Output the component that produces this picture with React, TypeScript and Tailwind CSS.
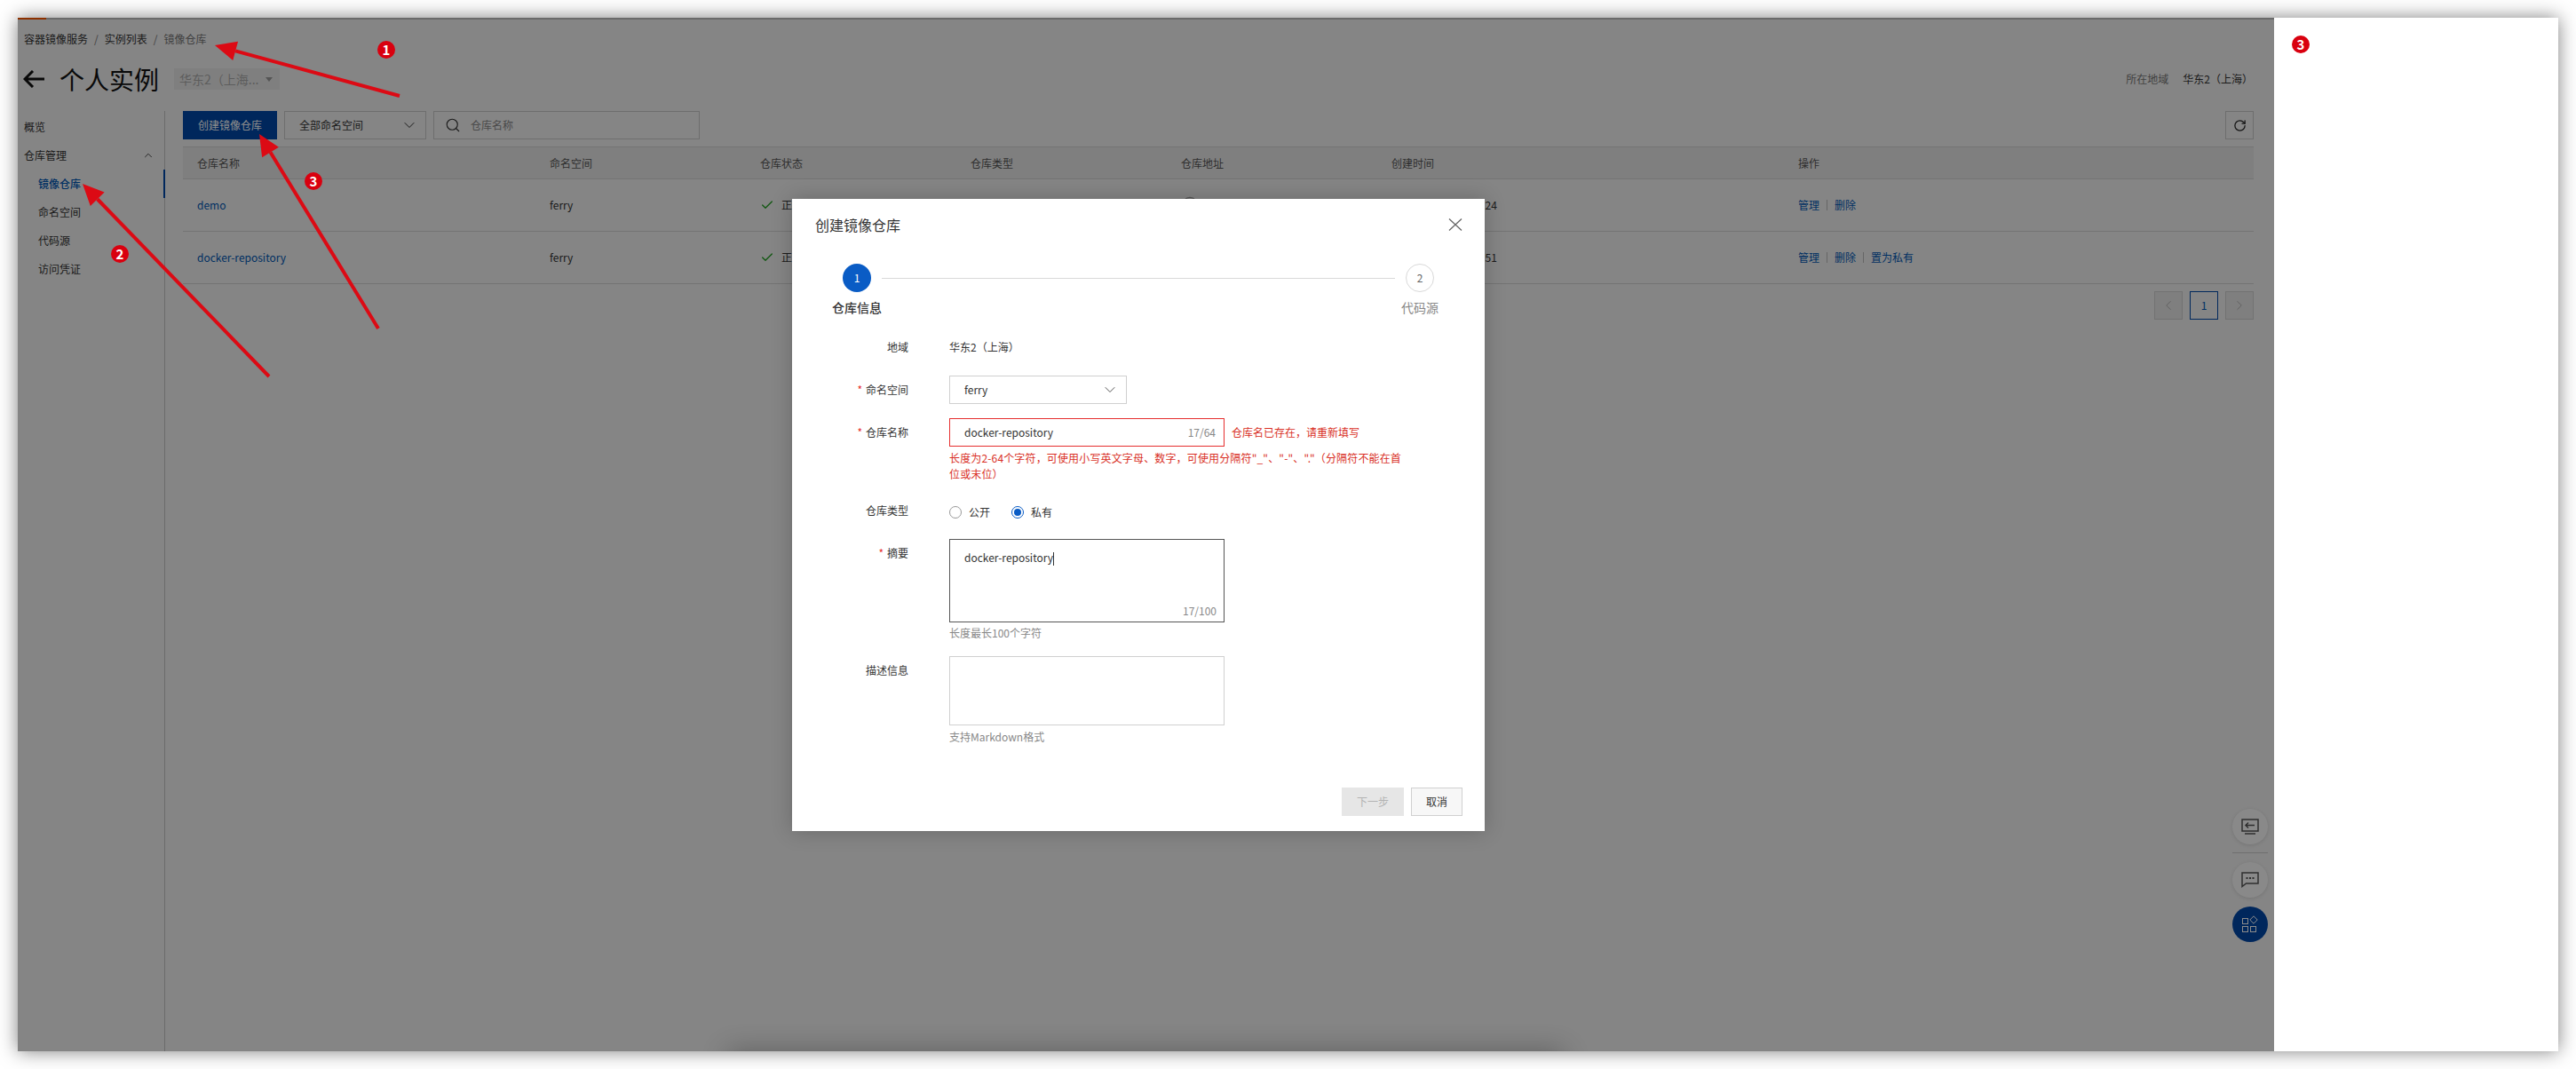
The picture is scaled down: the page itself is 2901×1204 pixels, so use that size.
import { ChevronDown, ChevronLeft, ChevronRight, ChevronUp, Check, RotateCw, Search } from "lucide-react";

const columns = ["仓库名称", "命名空间", "仓库状态", "仓库类型", "仓库地址", "创建时间", "操作"];

const repos = [
  { name: "demo", time: "2021-07-19 15:06:24", actions: ["管理", "删除"] },
  { name: "docker-repository", time: "2021-07-19 15:11:51", actions: ["管理", "删除", "置为私有"] },
];

const gridCols = "grid grid-cols-[397px_237px_237px_237px_237px_458px_1fr]";

function Annotation({ tail, tip }: { tail: number[]; tip: number[] }) {
  const dx = tip[0] - tail[0];
  const dy = tip[1] - tail[1];
  const len = Math.hypot(dx, dy);
  const ux = dx / len;
  const uy = dy / len;
  const baseX = tip[0] - ux * 24;
  const baseY = tip[1] - uy * 24;
  const head = [
    `${tip[0]},${tip[1]}`,
    `${baseX - uy * 11},${baseY + ux * 11}`,
    `${baseX + uy * 11},${baseY - ux * 11}`,
  ].join(" ");
  return (
    <g fill="#dc0a14" stroke="#dc0a14">
      <line x1={tail[0]} y1={tail[1]} x2={baseX} y2={baseY} strokeWidth="4" />
      <polygon points={head} strokeWidth="0" />
    </g>
  );
}

function Badge({ n, className }: { n: number; className: string }) {
  return (
    <div
      className={`absolute w-5 h-5 rounded-full bg-[#d9000f] text-white text-[15px] font-bold leading-5 text-center ${className}`}
    >
      {n}
    </div>
  );
}

function FormRow({
  label,
  required,
  labelClass = "leading-8",
  className,
  children,
}: {
  label: string;
  required?: boolean;
  labelClass?: string;
  className: string;
  children: React.ReactNode;
}) {
  return (
    <div className={`flex items-start ${className}`}>
      <div className={`w-[131px] mr-[46px] shrink-0 text-right text-xs text-[#333] ${labelClass}`}>
        {required && <span className="text-[#e62e2e] mr-1">*</span>}
        {label}
      </div>
      <div className="flex-1 min-w-0">{children}</div>
    </div>
  );
}

function Modal() {
  return (
    <div className="absolute left-[872px] top-[204px] w-[780px] h-[712px] bg-white shadow-[0_0_22px_rgba(0,0,0,0.22)] flex flex-col">
      <div className="h-[58px] shrink-0 pl-[26px] pr-[25px] flex items-center justify-between">
        <span className="text-base text-[#333]">创建镜像仓库</span>
        <svg width="16" height="14" viewBox="0 0 16 14" fill="none" stroke="#666" strokeWidth="1.3">
          <path d="M1 0.5 L15 13.5 M15 0.5 L1 13.5" />
        </svg>
      </div>

      {/* Steps */}
      <div className="mt-[15px] pl-[45px] pr-[52px] flex items-start">
        <div className="flex flex-col items-center w-14">
          <div className="w-8 h-8 rounded-full bg-[#0a5cc5] text-white text-xs flex items-center justify-center">1</div>
          <div className="mt-[7px] text-sm leading-5 font-medium text-[#333]">仓库信息</div>
        </div>
        <div className="flex-1 h-px mt-4 mr-[7px] bg-[#d9d9d9]" />
        <div className="flex flex-col items-center">
          <div className="w-8 h-8 rounded-full border border-[#d9d9d9] text-[#666] text-xs flex items-center justify-center">2</div>
          <div className="mt-[7px] text-sm leading-5 text-[#888]">代码源</div>
        </div>
      </div>

      <FormRow label="地域" labelClass="leading-5" className="mt-[25px]">
        <div className="text-xs leading-5 text-[#333]">华东2（上海）</div>
      </FormRow>

      <FormRow label="命名空间" required className="mt-[22px]">
        <div className="w-[200px] h-8 border border-[#d0d0d0] pl-[16px] pr-[8px] flex items-center justify-between text-xs text-[#333]">
          ferry
          <ChevronDown size={20} strokeWidth={1.2} className="text-[#555]" />
        </div>
      </FormRow>

      <FormRow label="仓库名称" required className="mt-4">
        <div className="flex items-center">
          <div className="w-[310px] h-8 border border-[#e62e2e] pl-[16px] pr-[9px] flex items-center justify-between text-xs">
            <input readOnly value="docker-repository" className="w-[200px] outline-none text-[#333]" />
            <span className="text-[#888]">17/64</span>
          </div>
          <span className="ml-2 text-xs text-[#d93026]">仓库名已存在，请重新填写</span>
        </div>
        <div className="mt-1 w-[510px] text-xs leading-[18px] tracking-[0.15px] text-[#d93026]">
          长度为2-64个字符，可使用小写英文字母、数字，可使用分隔符"_"、"-"、"."（分隔符不能在首位或末位）
        </div>
      </FormRow>

      <FormRow label="仓库类型" labelClass="leading-4" className="mt-6">
        <div className="h-5 flex items-center text-xs text-[#333]">
          <span className="w-3.5 h-3.5 rounded-full border border-[#999]" />
          <span className="ml-2">公开</span>
          <span className="ml-6 w-3.5 h-3.5 rounded-full border border-[#0a5cc5] flex items-center justify-center">
            <span className="w-2 h-2 rounded-full bg-[#0a5cc5]" />
          </span>
          <span className="ml-2">私有</span>
        </div>
      </FormRow>

      <FormRow label="摘要" required className="mt-5">
        <div className="relative w-[310px] h-[94px] border border-[#555] pl-[16px] pt-[10px] text-xs leading-5 text-[#333]">
          docker-repository
          <span className="inline-block w-px h-[15px] bg-[#333] align-middle" />
          <span className="absolute right-[8px] bottom-[2px] text-[#888]">17/100</span>
        </div>
        <div className="mt-[3px] text-xs leading-[18px] text-[#888]">长度最长100个字符</div>
      </FormRow>

      <FormRow label="描述信息" className="mt-[17px]">
        <textarea readOnly className="block w-[310px] h-[78px] border border-[#d0d0d0] resize-none outline-none" />
        <div className="mt-1 text-xs leading-[18px] text-[#888]">支持Markdown格式</div>
      </FormRow>

      <div className="mt-auto mb-[17px] pr-[25px] flex justify-end gap-2">
        <button className="w-[70px] h-8 bg-[#e6e6e6] text-xs text-[#b3b3b3]">下一步</button>
        <button className="w-[58px] h-8 bg-[#f7f7f7] border border-[#d0d0d0] text-xs text-[#333]">取消</button>
      </div>
    </div>
  );
}

function RepoTable() {
  return (
    <div className="mt-2 text-xs">
      <div className={`${gridCols} h-[37px] items-center border-y border-[#d4d4d4] bg-[#e8e8e8] text-[#555]`}>
        {columns.map((c) => (
          <div key={c} className="px-4">
            {c}
          </div>
        ))}
      </div>
      {repos.map((repo) => (
        <div key={repo.name} className={`${gridCols} h-[59px] items-center border-b border-[#d4d4d4] text-[#333]`}>
          <div className="px-4 text-[#0058b4]">{repo.name}</div>
          <div className="px-4">ferry</div>
          <div className="px-4 flex items-center gap-2">
            <Check size={16} strokeWidth={2} className="text-[#22a022]" />
            正常
          </div>
          <div className="px-4">私有</div>
          <div className="px-4">
            <svg width="20" height="20" viewBox="0 0 20 20" fill="none" stroke="#999" strokeWidth="1.5" className="-mt-[1px]">
              <circle cx="10" cy="10" r="8.5" />
            </svg>
          </div>
          <div className="px-4 whitespace-nowrap">
            <span className="ml-2">{repo.time}</span>
          </div>
          <div className="px-4 flex items-center text-[#0058b4]">
            {repo.actions.map((a, i) => (
              <span key={a} className={i > 0 ? "ml-2 pl-2 border-l border-[#bbb] leading-3" : "leading-3"}>
                {a}
              </span>
            ))}
          </div>
        </div>
      ))}
      <div className="mt-2 flex justify-end gap-2">
        <div className="w-8 h-8 bg-[#e8e8e8] border border-[#d0d0d0] flex items-center justify-center text-[#aaa]">
          <ChevronLeft size={18} strokeWidth={1.2} />
        </div>
        <div className="w-8 h-8 border border-[#0048a8] flex items-center justify-center text-[#0058b4]">1</div>
        <div className="w-8 h-8 bg-[#e8e8e8] border border-[#d0d0d0] flex items-center justify-center text-[#aaa]">
          <ChevronRight size={18} strokeWidth={1.2} />
        </div>
      </div>
    </div>
  );
}

function Fabs() {
  return (
    <div className="absolute right-[7px] top-[891px] w-10 flex flex-col">
      <div className="w-10 h-10 rounded-full bg-[#fafafa] shadow-[0_1px_4px_rgba(0,0,0,0.12)] flex items-center justify-center">
        <svg width="20" height="18" viewBox="0 0 20 18" fill="none" stroke="#555" strokeWidth="1.5">
          <rect x="1" y="1" width="18" height="13" />
          <path d="M4 17 H16 M15 7.5 H5 M8 4.5 L5 7.5 L8 10.5" />
        </svg>
      </div>
      <div className="mt-[9px] h-px bg-[#c8c8c8]" />
      <div className="mt-[10px] w-10 h-10 rounded-full bg-[#fafafa] shadow-[0_1px_4px_rgba(0,0,0,0.12)] flex items-center justify-center">
        <svg width="20" height="18" viewBox="0 0 20 18" fill="none" stroke="#555" strokeWidth="1.5">
          <path d="M1 1 H19 V13 H5.5 L1 16.5 Z" />
          <path d="M5.5 7 H7.5 M9 7 H11 M12.5 7 H14.5" strokeWidth="2" />
        </svg>
      </div>
      <div className="mt-[10px] w-10 h-10 rounded-full bg-[#0048a8] flex items-center justify-center">
        <svg width="20" height="20" viewBox="0 0 20 20" fill="none" stroke="#fff" strokeWidth="1">
          <rect x="1.5" y="3.5" width="6" height="6" />
          <rect x="1.5" y="12.5" width="6" height="6" />
          <rect x="10.5" y="12.5" width="6" height="6" />
          <path d="M14 0.8 L18.2 5 L14 9.2 L9.8 5 Z" />
        </svg>
      </div>
    </div>
  );
}

function Console() {
  return (
    <div className="relative flex-1 min-w-0 flex flex-col overflow-hidden bg-[#f2f2f2]">
      <div className="h-[2px] shrink-0 bg-[#c4c4c4]">
        <div className="w-8 h-full bg-[#ff5a00]" />
      </div>

      {/* Breadcrumb */}
      <div className="pt-[14px] pl-[7px] flex items-center text-xs leading-4 text-[#333]">
        容器镜像服务
        <span className="mx-[7px] text-[#777]">/</span>
        实例列表
        <span className="mx-[7px] text-[#777]">/</span>
        <span className="text-[#777]">镜像仓库</span>
      </div>

      {/* Title */}
      <div className="mt-[17px] pl-[6px] pr-[24px] h-10 shrink-0 flex items-center">
        <svg width="24" height="20" viewBox="0 0 24 20" fill="none" stroke="#111" strokeWidth="3">
          <path d="M11 1 L2 10 L11 19 M2 10 H24" />
        </svg>
        <h1 className="ml-[17px] text-[28px] leading-10 font-normal text-[#111]">个人实例</h1>
        <div className="ml-[17px] w-[119px] h-6 pl-[6px] pr-2 bg-[#e8e8e8] flex items-center justify-between text-sm text-[#aaa]">
          华东2（上海...
          <span className="w-0 h-0 border-x-[4px] border-x-transparent border-t-[5px] border-t-[#999]" />
        </div>
        <div className="ml-auto text-xs text-[#777]">所在地域</div>
        <div className="ml-4 text-xs text-[#333]">华东2（上海）</div>
      </div>

      {/* Body */}
      <div className="mt-4 flex-1 flex min-h-0">
        <aside className="w-[166px] shrink-0 border-r border-[#c4c4c4] pt-[2px] text-xs text-[#333]">
          <div className="h-8 pl-[7px] flex items-center">概览</div>
          <div className="h-8 pl-[7px] pr-[11px] flex items-center justify-between">
            仓库管理
            <ChevronUp size={14} strokeWidth={1.5} />
          </div>
          <div className="h-8 pl-[23px] flex items-center font-medium text-[#0058b4] border-r-2 border-[#0048a8] -mr-px">镜像仓库</div>
          <div className="h-8 pl-[23px] flex items-center">命名空间</div>
          <div className="h-8 pl-[23px] flex items-center">代码源</div>
          <div className="h-8 pl-[23px] flex items-center">访问凭证</div>
        </aside>

        <main className="flex-1 min-w-0 pl-5 pr-[23px]">
          <div className="flex items-center h-8 text-xs">
            <button className="w-[106px] h-8 bg-[#0048a8] text-white">创建镜像仓库</button>
            <div className="ml-2 w-[160px] h-8 border border-[#c8c8c8] pl-4 pr-2 flex items-center justify-between text-[#333]">
              全部命名空间
              <ChevronDown size={20} strokeWidth={1.2} />
            </div>
            <div className="ml-2 w-[300px] h-8 border border-[#c8c8c8] pl-3 flex items-center">
              <Search size={18} strokeWidth={1.5} className="text-[#333]" />
              <input readOnly placeholder="仓库名称" className="ml-[11px] flex-1 outline-none placeholder:text-[#888]" />
            </div>
            <div className="ml-auto w-8 h-8 border border-[#c8c8c8] flex items-center justify-center text-[#222]">
              <RotateCw size={15} strokeWidth={2} />
            </div>
          </div>
          <RepoTable />
        </main>
      </div>

      <Fabs />

      {/* dim layer of the dialog */}
      <div className="absolute inset-0 bg-black/45" />
      <div className="absolute left-[800px] w-[940px] top-[1164px] h-6 shadow-[0_0_30px_rgba(0,0,0,0.3)]" />
      <Modal />
    </div>
  );
}

export default function App() {
  return (
    <div className="relative w-[2901px] h-[1204px] p-5 bg-white overflow-hidden [font-family:'Noto_Sans_CJK_SC',sans-serif]">
      <div className="flex h-full shadow-[0_0_20px_rgba(0,0,0,0.5)]">
        <Console />
        <div className="w-[320px] shrink-0 bg-white" />
      </div>

      {/* Arrows and numbers drawn over the screenshot */}
      <svg className="absolute inset-0 pointer-events-none" width="2901" height="1204" viewBox="0 0 2901 1204">
        <Annotation tail={[450, 108]} tip={[242, 51]} />
        <Annotation tail={[303, 424]} tip={[93, 207]} />
        <Annotation tail={[426, 370]} tip={[292, 151]} />
      </svg>
      <Badge n={1} className="left-[425px] top-[46px]" />
      <Badge n={2} className="left-[125px] top-[276px]" />
      <Badge n={3} className="left-[343px] top-[194px]" />
      <Badge n={3} className="left-[2581px] top-[40px]" />
    </div>
  );
}
